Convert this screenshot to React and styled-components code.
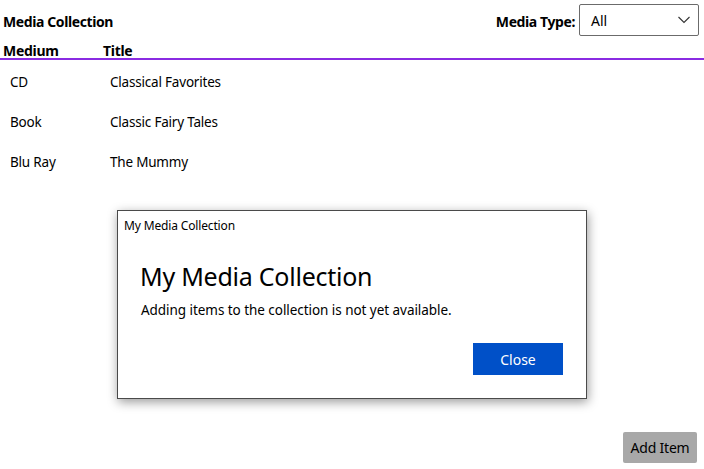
import React, { useState } from 'react';
import styled, { createGlobalStyle } from 'styled-components';

const GlobalStyle = createGlobalStyle`
    html, body {
        margin: 0;
        padding: 0;
        background: #fff;
    }
    body {
        font-family: "Noto Sans", "Open Sans", sans-serif;
        color: #000;
    }
`;

/* Page */
const Page = styled.div`
    position: relative;
    display: flex;
    flex-direction: column;
    width: 704px;
    height: 469px;
    overflow: hidden;
`;

const Toolbar = styled.div`
    display: flex;
    align-items: flex-start;
    justify-content: space-between;
    height: 36px;
    box-sizing: border-box;
    padding: 4px 5px 0 3px;
`;

const PageTitle = styled.h1`
    margin: 0;
    font-size: 14px;
    line-height: 36px;
    font-weight: 700;
    letter-spacing: -0.4px;
`;

const FilterGroup = styled.div`
    display: flex;
    align-items: flex-start;
    gap: 4px;
`;

const FilterLabel = styled.span`
    font-size: 14px;
    line-height: 36px;
    font-weight: 700;
    letter-spacing: -0.4px;
`;

const Select = styled.div`
    display: flex;
    align-items: center;
    justify-content: space-between;
    box-sizing: border-box;
    width: 120px;
    height: 32px;
    padding: 0 8px 0 11px;
    border: 1px solid #6b6b6b;
    border-radius: 2px;
    font-size: 14px;

    svg {
        display: block;
    }
`;

/* Table */
const HeaderRow = styled.div`
    display: grid;
    grid-template-columns: 100px 1fr;
    height: 24px;
    box-sizing: border-box;
    padding: 5px 0 0 3px;
    border-bottom: 2px solid #8a2be2;
    font-size: 14px;
    line-height: 20px;
    font-weight: 700;
    letter-spacing: -0.3px;
`;

const Rows = styled.div`
    margin-top: 2px;
`;

const Row = styled.div`
    display: grid;
    grid-template-columns: 100px 1fr;
    height: 40px;
    padding-left: 10px;
    align-items: center;
    font-size: 13.5px;
    letter-spacing: -0.2px;
`;

const Spacer = styled.div`
    flex: 1;
`;

const Footer = styled.div`
    display: flex;
    justify-content: flex-end;
    padding: 0 7px 6px 0;
`;

const AddButton = styled.button`
    width: 74px;
    height: 31px;
    border: none;
    border-radius: 2px;
    background: #a8a8a8;
    color: #000;
    font-family: inherit;
    font-size: 14px;
    letter-spacing: -0.2px;
    padding: 0;
`;

/* Dialog */
const Dialog = styled.div`
    position: absolute;
    left: 117px;
    top: 210px;
    width: 470px;
    height: 189px;
    box-sizing: border-box;
    background: #fff;
    border: 1px solid #4a4a4a;
    box-shadow: 1px 3px 10px rgba(0, 0, 0, 0.4);
    display: flex;
    flex-direction: column;
`;

const DialogTitleBar = styled.div`
    height: 28px;
    padding-left: 6px;
    display: flex;
    align-items: center;
    font-size: 12px;
    letter-spacing: -0.15px;
`;

const DialogBody = styled.div`
    flex: 1;
    display: flex;
    flex-direction: column;
    padding: 19px 23px 23px 22px;
`;

const DialogHeading = styled.h2`
    margin: 0;
    font-size: 25px;
    font-weight: 400;
    line-height: 36px;
    letter-spacing: -0.25px;
`;

const DialogText = styled.p`
    margin: 7px 0 0 1px;
    font-size: 13.5px;
    letter-spacing: -0.05px;
`;

const DialogActions = styled.div`
    margin-top: auto;
    display: flex;
    justify-content: flex-end;
`;

const PrimaryButton = styled.button`
    width: 90px;
    height: 32px;
    border: none;
    background: #0050c8;
    color: #fff;
    font-family: inherit;
    font-size: 14px;
    padding: 0;
`;

const ChevronDown = () => (
    <svg width="12" height="8" viewBox="0 0 12 8" fill="none">
        <path d="M0.5 1l5.5 5.5L11.5 1" stroke="#333" strokeWidth="1.1" />
    </svg>
);

const items = [
    { medium: 'CD', title: 'Classical Favorites' },
    { medium: 'Book', title: 'Classic Fairy Tales' },
    { medium: 'Blu Ray', title: 'The Mummy' },
];

const App = () => {
    const [open, setOpen] = useState(true);

    return (
        <Page>
            <GlobalStyle />
            <Toolbar>
                <PageTitle>Media Collection</PageTitle>
                <FilterGroup>
                    <FilterLabel>Media Type:</FilterLabel>
                    <Select>
                        <span>All</span>
                        <ChevronDown />
                    </Select>
                </FilterGroup>
            </Toolbar>
            <HeaderRow>
                <span>Medium</span>
                <span>Title</span>
            </HeaderRow>
            <Rows>
                {items.map((item) => (
                    <Row key={item.title}>
                        <span>{item.medium}</span>
                        <span>{item.title}</span>
                    </Row>
                ))}
            </Rows>
            <Spacer />
            <Footer>
                <AddButton onClick={() => setOpen(true)}>Add Item</AddButton>
            </Footer>
            {open && (
                <Dialog>
                    <DialogTitleBar>My Media Collection</DialogTitleBar>
                    <DialogBody>
                        <DialogHeading>My Media Collection</DialogHeading>
                        <DialogText>Adding items to the collection is not yet available.</DialogText>
                        <DialogActions>
                            <PrimaryButton onClick={() => setOpen(false)}>Close</PrimaryButton>
                        </DialogActions>
                    </DialogBody>
                </Dialog>
            )}
        </Page>
    );
};

export default App;
